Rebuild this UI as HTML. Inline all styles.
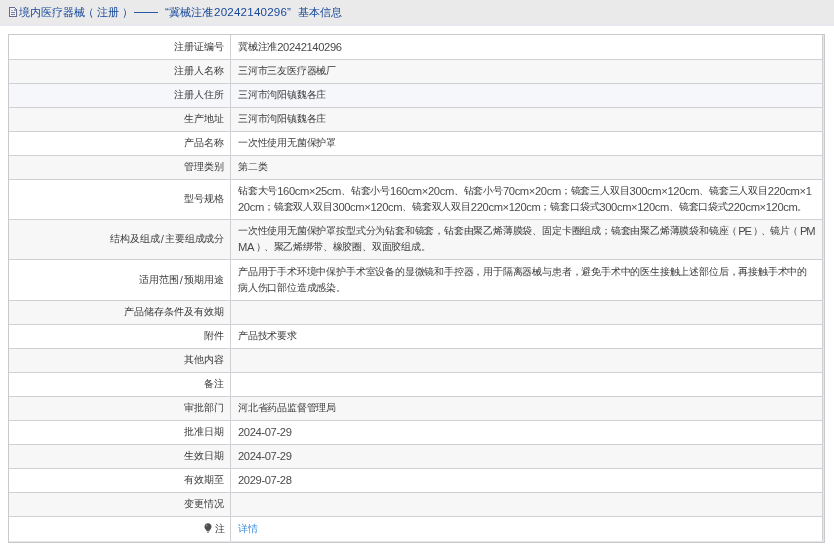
<!DOCTYPE html>
<html><head><meta charset="utf-8">
<style>
html,body{margin:0;padding:0;background:#fff;width:834px;height:550px;overflow:hidden;position:relative;}
body{font-family:"Liberation Sans",sans-serif;color:#555;}
.lab,.val,.hs{will-change:transform;}
.hd{position:absolute;left:0;top:0;width:834px;height:24px;background:#eaeaea;border-bottom:2px solid #e7e8ed;}
.hs{position:absolute;top:4px;line-height:16px;color:#17489a;white-space:nowrap;font-size:11px;letter-spacing:0.1px;}
.hs.n{font-size:11.6px;letter-spacing:0;line-height:16px;position:absolute;top:4px;color:#17489a;}
.dash{position:absolute;top:12px;height:1px;background:#2a5aa5;}
.hd svg{position:absolute;left:9px;top:7px;}
.box{position:absolute;left:8px;top:34px;width:815px;height:507px;border:1px solid #c9c9cc;background:#e5e5ea;}
.row{position:absolute;left:9px;width:814px;}
.hl{position:absolute;left:9px;width:814px;height:1px;background:#d0d0d4;}
.vl{position:absolute;top:35px;width:1px;height:506px;background:#d0d0d4;}
.lab,.val{position:absolute;font-size:10.3px;letter-spacing:-0.19px;line-height:16px;white-space:nowrap;color:#3a3a3a;}
.lab{right:610px;text-align:right;letter-spacing:-0.05px;}
.val{left:238px;}
.n{font-size:11.2px;letter-spacing:-0.37px;line-height:0;position:relative;top:1px;color:#4a4a4a;}
.cp{letter-spacing:-1.2px;}
.sl{letter-spacing:0.9px;padding-left:0.9px;}
.lp{position:relative;left:-2px;}
.rp{position:relative;left:2px;}
.w{background:#fff;}
.g{background:#f7f7f7;}
.b{background:#f5f7fb;}
.lnk{color:#3b8be0;}
.bulb{vertical-align:-1px;margin-right:2.5px;}
</style></head><body>
<div class="hd">
<svg width="8" height="10" viewBox="0 0 8 10" shape-rendering="crispEdges"><rect x="0.5" y="0.5" width="7" height="9" fill="#f2f3fb" stroke="none"/><path d="M0.5 0V10M0 9.5H8M7.5 2V10M0 0.5H6M6 1.5H7" stroke="#666d8a" stroke-width="1" fill="none"/><rect x="5" y="2" width="2" height="2" fill="#8fa6d8"/><rect x="2" y="3" width="2" height="1" fill="#c4a0a6"/><rect x="2" y="5" width="4" height="1" fill="#767d96"/><rect x="2" y="7" width="4" height="1" fill="#767d96"/></svg>
<div class="hs" style="left:19px">境内医疗器械<span style="position:relative;left:-3px">（</span>注册<span style="position:relative;left:3px">）</span></div>
<div class="dash" style="left:134px;width:24px"></div>
<div class="hs n" style="left:165px">“</div>
<div class="hs" style="left:169px">冀械注准</div>
<div class="hs n" style="left:214px;letter-spacing:0.2px">20242140296</div><div class="hs n" style="left:287px">”</div>
<div class="hs" style="left:298px">基本信息</div>
</div>
<div class="box"></div>
<div class="row w" style="top:35px;height:24px"></div>
<div class="lab" style="top:39px">注册证编号</div>
<div class="val" style="top:39px">冀械注准<span class="n">20242140296</span></div>
<div class="row g" style="top:60px;height:23px"></div>
<div class="lab" style="top:63px">注册人名称</div>
<div class="val" style="top:63px">三河市三友医疗器械厂</div>
<div class="row b" style="top:84px;height:23px"></div>
<div class="lab" style="top:87px">注册人住所</div>
<div class="val" style="top:87px">三河市泃阳镇魏各庄</div>
<div class="row g" style="top:108px;height:23px"></div>
<div class="lab" style="top:111px">生产地址</div>
<div class="val" style="top:111px">三河市泃阳镇魏各庄</div>
<div class="row w" style="top:132px;height:23px"></div>
<div class="lab" style="top:135px">产品名称</div>
<div class="val" style="top:135px">一次性使用无菌保护罩</div>
<div class="row g" style="top:156px;height:23px"></div>
<div class="lab" style="top:159px">管理类别</div>
<div class="val" style="top:159px">第二类</div>
<div class="row w" style="top:180px;height:39px"></div>
<div class="lab" style="top:191px">型号规格</div>
<div class="val" style="top:183px">钻套大号<span class="n">160cm×25cm</span>、钻套小号<span class="n">160cm×20cm</span>、钻套小号<span class="n">70cm×20cm</span>；镜套三人双目<span class="n">300cm×120cm</span>、镜套三人双目<span class="n">220cm×1</span><br><span class="n">20cm</span>；镜套双人双目<span class="n">300cm×120cm</span>、镜套双人双目<span class="n">220cm×120cm</span>；镜套口袋式<span class="n">300cm×120cm</span>、镜套口袋式<span class="n">220cm×120cm</span>。</div>
<div class="row g" style="top:220px;height:39px"></div>
<div class="lab" style="top:231px">结构及组成<span class="n"><span class="sl">/</span></span>主要组成成分</div>
<div class="val" style="top:223px">一次性使用无菌保护罩按型式分为钻套和镜套，钻套由聚乙烯薄膜袋、固定卡圈组成；镜套由聚乙烯薄膜袋和镜座<span class="lp">（</span><span class="n"><span class="cp">P</span><span class="cp">E</span></span><span class="rp">）</span>、镜片<span class="lp">（</span><span class="n"><span class="cp">P</span>M</span><br><span class="n">MA</span><span class="rp">）</span>、聚乙烯绑带、橡胶圈、双面胶组成。</div>
<div class="row w" style="top:260px;height:40px"></div>
<div class="lab" style="top:272px">适用范围<span class="n"><span class="sl">/</span></span>预期用途</div>
<div class="val" style="top:264px">产品用于手术环境中保护手术室设备的显微镜和手控器，用于隔离器械与患者，避免手术中的医生接触上述部位后，再接触手术中的<br>病人伤口部位造成感染。</div>
<div class="row g" style="top:301px;height:23px"></div>
<div class="lab" style="top:304px">产品储存条件及有效期</div>
<div class="row w" style="top:325px;height:23px"></div>
<div class="lab" style="top:328px">附件</div>
<div class="val" style="top:328px">产品技术要求</div>
<div class="row g" style="top:349px;height:23px"></div>
<div class="lab" style="top:352px">其他内容</div>
<div class="row w" style="top:373px;height:23px"></div>
<div class="lab" style="top:376px">备注</div>
<div class="row g" style="top:397px;height:23px"></div>
<div class="lab" style="top:400px">审批部门</div>
<div class="val" style="top:400px">河北省药品监督管理局</div>
<div class="row w" style="top:421px;height:23px"></div>
<div class="lab" style="top:424px">批准日期</div>
<div class="val" style="top:424px"><span class="n">2024-07-29</span></div>
<div class="row g" style="top:445px;height:23px"></div>
<div class="lab" style="top:448px">生效日期</div>
<div class="val" style="top:448px"><span class="n">2024-07-29</span></div>
<div class="row w" style="top:469px;height:23px"></div>
<div class="lab" style="top:472px">有效期至</div>
<div class="val" style="top:472px"><span class="n">2029-07-28</span></div>
<div class="row g" style="top:493px;height:23px"></div>
<div class="lab" style="top:496px">变更情况</div>
<div class="row w" style="top:517px;height:24px"></div>
<div class="lab" style="top:521px"><svg class="bulb" width="8" height="10" viewBox="0 0 8 10"><path d="M4 0.2C1.9 0.2 0.5 1.7 0.5 3.7C0.5 5.2 1.3 6.1 2.4 7.1L2.6 8.3H5.4L5.6 7.1C6.7 6.1 7.5 5.2 7.5 3.7C7.5 1.7 6.1 0.2 4 0.2Z" fill="#4e4e52"/><circle cx="2.6" cy="2.4" r="0.9" fill="#8a8a8a"/><rect x="2.9" y="8.7" width="2.2" height="1.1" fill="#8a8a8a"/></svg>注</div>
<div class="val" style="top:521px"><span class="lnk">详情</span></div>
<div class="hl" style="top:59px"></div>
<div class="hl" style="top:83px"></div>
<div class="hl" style="top:107px"></div>
<div class="hl" style="top:131px"></div>
<div class="hl" style="top:155px"></div>
<div class="hl" style="top:179px"></div>
<div class="hl" style="top:219px"></div>
<div class="hl" style="top:259px"></div>
<div class="hl" style="top:300px"></div>
<div class="hl" style="top:324px"></div>
<div class="hl" style="top:348px"></div>
<div class="hl" style="top:372px"></div>
<div class="hl" style="top:396px"></div>
<div class="hl" style="top:420px"></div>
<div class="hl" style="top:444px"></div>
<div class="hl" style="top:468px"></div>
<div class="hl" style="top:492px"></div>
<div class="hl" style="top:516px"></div>
<div class="vl" style="left:230px"></div>
<div class="vl" style="left:822px"></div>
</body></html>
